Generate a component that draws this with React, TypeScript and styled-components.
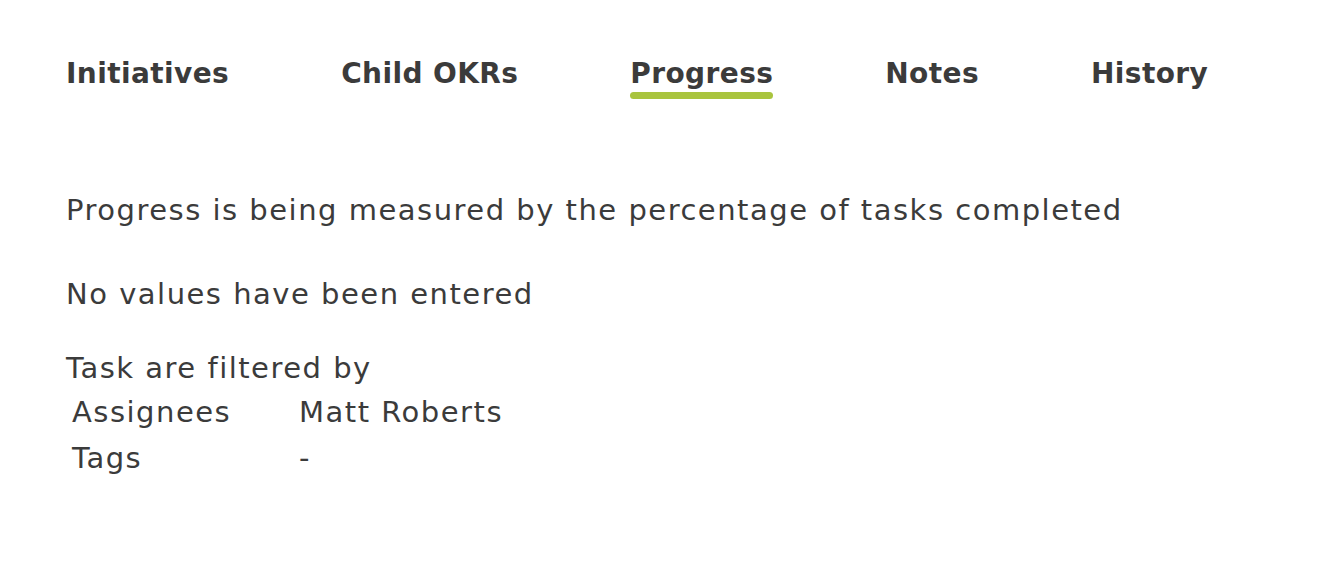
import React from "react";
import styled, { createGlobalStyle } from "styled-components";

const Global = createGlobalStyle`
  html, body { margin: 0; padding: 0; background: #ffffff; }
  body { font-family: "DejaVu Sans", "Noto Sans", sans-serif; color: #3b3b3b; }
`;

const Page = styled.div`
  padding: 54px 66px 0 66px;
  display: flex;
  flex-direction: column;
`;

const TabBar = styled.nav`
  display: flex;
  gap: 112px;
  align-items: flex-start;
`;

const Tab = styled.div<{ $active?: boolean }>`
  position: relative;
  font-size: 28px;
  font-weight: 700;
  letter-spacing: 0.4px;
  line-height: 40px;
  color: #3b3b3b;
  padding-bottom: 5px;
  &::after {
    content: "";
    display: ${(p) => (p.$active ? "block" : "none")};
    position: absolute;
    left: 0;
    right: 0;
    bottom: 0;
    height: 7px;
    border-radius: 4px;
    background: #a9c43e;
  }
`;

const Body = styled.div`
  display: flex;
  flex-direction: column;
  margin-top: 92px;
  font-size: 29px;
  letter-spacing: 1.5px;
  line-height: 38px;
`;

const Paragraph = styled.p<{ $gap?: number }>`
  margin: 0 0 ${(p) => p.$gap ?? 0}px 0;
`;

const FilterGrid = styled.div`
  display: grid;
  grid-template-columns: 227px auto;
  padding-left: 6px;
  row-gap: 8px;
  line-height: 38px;
`;

export default function App() {
  const tabs = ["Initiatives", "Child OKRs", "Progress", "Notes", "History"];
  return (
    <>
      <Global />
      <Page>
        <TabBar>
          {tabs.map((t) => (
            <Tab key={t} $active={t === "Progress"}>
              {t}
            </Tab>
          ))}
        </TabBar>
        <Body>
          <Paragraph $gap={46}>
            Progress is being measured by the percentage of tasks completed
          </Paragraph>
          <Paragraph $gap={36}>No values have been entered</Paragraph>
          <Paragraph $gap={6}>Task are filtered by</Paragraph>
          <FilterGrid>
            <span>Assignees</span>
            <span>Matt Roberts</span>
            <span>Tags</span>
            <span>-</span>
          </FilterGrid>
        </Body>
      </Page>
    </>
  );
}
